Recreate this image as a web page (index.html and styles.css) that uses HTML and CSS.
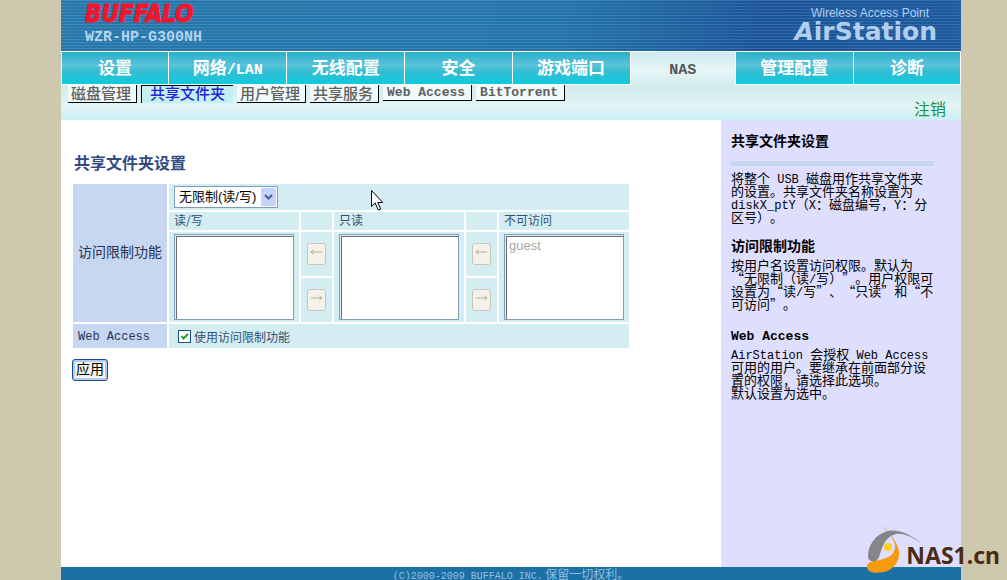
FILE: index.html
```html
<!DOCTYPE html>
<html lang="zh-CN">
<head>
<meta charset="utf-8">
<title>AirStation - 共享文件夹设置</title>
<link rel="stylesheet" href="styles.css">
</head>
<body>
<div class="page">
  <header class="banner">
    <div class="brand">
      <div class="brand-name">BUFFALO</div>
      <div class="model">WZR-HP-G300NH</div>
    </div>
    <div class="product">
      <div class="product-kind">Wireless Access Point</div>
      <div class="product-name"><span class="slant">A</span>irStation</div>
    </div>
  </header>

  <div class="menus">
    <nav class="tabs">
      <a class="tab" href="#">设置</a>
      <a class="tab long" href="#">网络<span class="mono">/LAN</span></a>
      <a class="tab long" href="#">无线配置</a>
      <a class="tab" href="#">安全</a>
      <a class="tab long" href="#">游戏端口</a>
      <a class="tab current" href="#"><span class="mono">NAS</span></a>
      <a class="tab long" href="#">管理配置</a>
      <a class="tab" href="#">诊断</a>
    </nav>
    <div class="subbar">
      <nav class="subtabs">
        <a class="subtab" href="#">磁盘管理</a>
        <a class="subtab active" href="#">共享文件夹</a>
        <a class="subtab" href="#">用户管理</a>
        <a class="subtab" href="#">共享服务</a>
        <a class="subtab latin" href="#">Web Access</a>
        <a class="subtab latin" href="#">BitTorrent</a>
      </nav>
      <a class="logout" href="#">注销</a>
    </div>
  </div>

  <div class="body">
    <main class="content">
      <h1>共享文件夹设置</h1>
      <form>
        <table class="settings">
          <colgroup>
            <col class="c-label"><col class="c-list"><col class="c-move"><col class="c-list"><col class="c-move"><col class="c-list">
          </colgroup>
          <tr class="r-mode">
            <th rowspan="4" scope="row"><label for="mode">访问限制功能</label></th>
            <td colspan="5">
              <span class="dropdown">
                <select id="mode"><option>无限制(读/写)</option></select>
                <svg class="chevron" viewBox="0 0 15 18" aria-hidden="true"><rect width="15" height="18" rx="1"/><path d="M4 7l3.5 3.5L11 7"/></svg>
              </span>
            </td>
          </tr>
          <tr class="r-head">
            <td><label for="rw">读/写</label></td>
            <td></td>
            <td><label for="ro">只读</label></td>
            <td></td>
            <td><label for="none">不可访问</label></td>
          </tr>
          <tr class="r-list">
            <td rowspan="2"><select class="list" id="rw" size="5" multiple></select></td>
            <td class="move"><button type="button" disabled aria-label="移至读/写"><svg viewBox="0 0 14 8"><path d="M1 4h12M4 1.500L1 4l3 2.500"/></svg></button></td>
            <td rowspan="2"><select class="list" id="ro" size="5" multiple></select></td>
            <td class="move"><button type="button" disabled aria-label="移至只读"><svg viewBox="0 0 14 8"><path d="M1 4h12M4 1.500L1 4l3 2.500"/></svg></button></td>
            <td rowspan="2"><select class="list" id="none" size="5" multiple><option disabled>guest</option></select></td>
          </tr>
          <tr class="r-list">
            <td class="move"><button type="button" disabled aria-label="移至只读"><svg viewBox="0 0 14 8"><path d="M1 4h12M10 1.500L13 4l-3 2.500"/></svg></button></td>
            <td class="move"><button type="button" disabled aria-label="移至不可访问"><svg viewBox="0 0 14 8"><path d="M1 4h12M10 1.500L13 4l-3 2.500"/></svg></button></td>
          </tr>
          <tr class="r-web">
            <th scope="row"><span class="mono">Web Access</span></th>
            <td colspan="5"><label class="check"><input type="checkbox" checked>使用访问限制功能</label></td>
          </tr>
        </table>
        <button class="apply" type="button">应用</button>
      </form>
    </main>

    <aside class="help">
      <h2>共享文件夹设置</h2>
      <hr>
      <p>将整个<span class="mono"> USB </span>磁盘用作共享文件夹<br>的设置。共享文件夹名称设置为<br><span class="mono">diskX_ptY</span>（<span class="mono">X</span>：磁盘编号，<span class="mono">Y</span>：分<br>区号）。</p>
      <h2>访问限制功能</h2>
      <p>按用户名设置访问权限。默认为<br>“无限制（读<span class="mono">/</span>写）”。用户权限可<br>设置为“读<span class="mono">/</span>写”、“只读”和“不<br>可访问”。</p>
      <h2><span class="mono">Web Access</span></h2>
      <p><span class="mono">AirStation </span>会授权<span class="mono"> Web Access</span><br>可用的用户。要继承在前面部分设<br>置的权限，请选择此选项。<br>默认设置为选中。</p>
    </aside>
  </div>

  <footer class="footer"><span class="mono">(C)2000-2009 BUFFALO INC.</span> 保留一切权利。</footer>
</div>

<svg class="pointer" viewBox="0 0 13 21" aria-hidden="true"><path d="M.5.5v16l3.700-3.500 3 7 2.500-1-3-6.500h5z"/></svg>

<div class="watermark">
  <svg viewBox="0 0 56 50" aria-hidden="true">
    <path class="w-orange" d="M14 1c8 7 16 16 18 26 1 10-5 19-15 21C8 50 0 48 0 43c0-5 6-6 12-7 9-2 17-5 16-15C27 14 20 8 14 1z"/>
    <path class="w-gray" d="M54 19C44 11 32 5 21 7 8 10 1 22 1 32c0 6 8 8 11 1 3-8 5-20 17-23 9-1 17 4 25 9z"/>
    <circle class="w-yellow" cx="21" cy="23" r="4"/>
  </svg>
  <span>NAS1.cn</span>
</div>
</body>
</html>
```
FILE: styles.css
```css
* { box-sizing: border-box; }

body {
  margin: 0;
  padding: 0 46px 0 61px;
  background: #cec8ae;
  font-family: "Noto Sans CJK SC", sans-serif;
  font-size: 13px;
  text-spacing-trim: space-all;
}

a { text-decoration: none; }

.mono {
  font-family: "Liberation Mono", monospace;
  font-size: 12px;
  line-height: 0;
}

.page {
  display: flex;
  flex-direction: column;
  height: 100vh;
  min-width: 880px;
  background: #fff;
}

/* Banner */
.banner {
  display: flex;
  justify-content: space-between;
  height: 51px;
  padding: 0 24px;
  background:
    repeating-linear-gradient(rgba(255, 255, 255, .12) 0 1px, transparent 1px 3px),
    linear-gradient(100deg, #2577ac 0%, #2274aa 55%, #1a5499 78%, #1b5a9d 100%);
}

.brand-name {
  height: 28px;
  color: #f3152c;
  font: italic bold 24px/28px "DejaVu Sans Condensed", "DejaVu Sans", sans-serif;
  -webkit-text-stroke: 1px #f3152c;
}

.model {
  color: #b4d5ec;
  font: bold 15px/20px "Liberation Mono", monospace;
}

.product {
  padding-top: 5px;
  color: #b0cfee;
  text-align: right;
}

.product-kind {
  padding-right: 8px;
  font: 12px/16px "Liberation Sans", Arial, sans-serif;
}

.product-name { font: bold 25px/22px "DejaVu Sans", sans-serif; }
.slant { font-style: oblique; }

/* Menus */
.menus {
  height: 69px;
  border-top: 1px solid #fff;
  background: linear-gradient(#cdeaee 0, #e6f5f6 26%, #d3ebed 52%, #e2f4f5 80%, #caf0f3 100%);
}

.tabs {
  display: flex;
  height: 33px;
  padding: 0 0 0 1px;
}

.tab {
  flex: 107 1 0;
  border-right: 1px solid #fff;
  border-bottom: 1px solid #fff;
  background: linear-gradient(#2baecb 0, #5ac3d9 42%, #32bdd2 62%, #12c9dd 100%);
  color: #fff;
  font-size: 17px;
  font-weight: bold;
  line-height: 30px;
  text-align: center;
}

.tab.long { flex-grow: 118; }
.tab .mono { font-size: 15px; }

.tab.current {
  flex-grow: 105;
  border-bottom: 0;
  background: none;
  color: #555;
}

.subbar {
  display: flex;
  justify-content: space-between;
  padding: 0 15px 0 7px;
}

.subtabs {
  display: flex;
  align-items: flex-start;
  gap: 4px;
}

.subtab {
  height: 18px;
  padding: 0 5px 0 3px;
  border-right: 1px solid #000;
  border-bottom: 1px solid #000;
  background: #f0fafa;
  color: #606060;
  font-size: 15px;
  font-weight: 500;
  line-height: 15px;
}

.subtab.active {
  padding: 0 8px;
  border: 0 solid #000;
  border-width: 1px 0 0 1px;
  background: #c4f0f1;
  color: #2323d8;
  line-height: 13px;
}

.subtab.latin {
  height: 16px;
  padding: 0 6px 0 4px;
  font: bold 13px/16px "Liberation Mono", monospace;
}

.logout {
  padding-top: 12px;
  color: #159447;
  font-size: 16px;
  line-height: 22px;
}

/* Body */
.body {
  display: flex;
  flex: 1;
  min-height: 0;
}

.content {
  flex: 1;
  padding: 31px 10px 0;
}

h1 {
  margin: 0 0 9px;
  padding-left: 3px;
  color: #334a80;
  font-size: 16px;
  line-height: 22px;
}

.settings {
  width: 560px;
  border-spacing: 2px;
  table-layout: fixed;
  color: #33506f;
}

.c-label { width: 94px; }
.c-list { width: 130px; }
.c-move { width: 31px; }

.settings th {
  padding: 0 5px 4px;
  background: #c8d7f1;
  color: #263352;
  font-size: 14px;
  font-weight: normal;
  line-height: 20px;
  text-align: left;
  white-space: nowrap;
}

.settings td {
  padding: 0 5px;
  background: #d3edf2;
  font-size: 12px;
}

.r-mode { height: 26px; }
.r-head { height: 18px; line-height: 16px; }
.r-list { height: 44px; }
.r-web { height: 24px; }

.r-head td { padding: 0 5px 2px; }

.dropdown {
  position: relative;
  display: block;
  width: 104px;
}

.dropdown select {
  display: block;
  width: 100%;
  height: 22px;
  padding: 0 18px 0 4px;
  border: 1px solid #7f9db9;
  border-radius: 0;
  background: #fff;
  appearance: none;
  color: #000;
  font: 13px/20px "Liberation Sans", "Noto Sans CJK SC", sans-serif;
}

.chevron {
  position: absolute;
  top: 2px;
  right: 2px;
  width: 15px;
  height: 18px;
  fill: #c3d3fb;
}

.chevron path {
  fill: none;
  stroke: #4d6185;
  stroke-width: 2;
}

.list {
  display: block;
  width: 120px;
  height: 86px;
  padding: 3px 2px;
  overflow: hidden;
  border: 1px solid #7f9db9;
  border-radius: 0;
  background: #fff;
  box-shadow: inset 1px 1px 0 #e4eef5, inset 2px 2px 0 #666b78;
  font: 13px/16px "Liberation Sans", Arial, sans-serif;
}

.list option {
  min-height: 16px;
  padding: 0 2px;
  color: #aca899;
}

.settings .move { text-align: center; }

.move button {
  display: flex;
  width: 19px;
  height: 22px;
  margin: 0 auto;
  padding: 4px 2px;
  border: 1px solid #c9c7ba;
  border-radius: 3px;
  background: #f4f2e8;
}

.move svg {
  width: 14px;
  height: 8px;
  fill: none;
  stroke: #aca899;
}

.check {
  display: flex;
  align-items: center;
  gap: 3px;
  padding-left: 4px;
}

.check input {
  width: 13px;
  height: 13px;
  margin: 0;
  border: 1px solid #1c5180;
  appearance: none;
  background: #fff;
}

.check input:checked {
  background: #fff url("data:image/svg+xml,%3Csvg xmlns='http://www.w3.org/2000/svg' viewBox='0 0 11 11'%3E%3Cpath d='M2.500 5l2 2.500L9 3' fill='none' stroke='%2321a121' stroke-width='2'/%3E%3C/svg%3E");
}

.apply {
  display: block;
  height: 22px;
  margin: 9px 0 0 1px;
  padding: 0 3px 4px;
  border: 1px solid #1d4a86;
  border-radius: 3px;
  background: #f5f4ee;
  box-shadow: inset 0 0 0 2px #b3cbf3;
  color: #000;
  font: 14px/16px "Noto Sans CJK SC", sans-serif;
}

/* Help column */
.help {
  flex: 0 0 240px;
  padding: 12px 10px 0;
  background: #dedeff;
  color: #000;
}

.help h2 {
  margin: 14px 0 5px;
  font-size: 14px;
  line-height: 16px;
}

.help p + h2:last-of-type { margin-top: 16px; }
.help h2:first-child { margin-top: 0; }
.help h2 .mono { font-size: 13px; }

.help hr {
  width: 203px;
  height: 5px;
  margin: 13px 0 5px;
  border: 0;
  background: #c5d7f0;
}

.help p {
  margin: 0;
  font-size: 13px;
  line-height: 13px;
  white-space: nowrap;
}

.footer {
  height: 13px;
  overflow: hidden;
  background: #1b70a5;
  color: #8fc0e0;
  font-size: 12px;
  line-height: 13px;
  text-align: center;
}

.footer .mono { font-size: 10px; }

/* Overlays */
.pointer {
  position: absolute;
  top: 190px;
  left: 371px;
  width: 13px;
  height: 21px;
  fill: #fff;
  stroke: #000;
}

.watermark {
  position: absolute;
  right: 7px;
  bottom: 6px;
  display: flex;
  height: 50px;
  color: #4a2c14;
  font: bold 23px/62px "Noto Sans", sans-serif;
}

.watermark svg {
  width: 56px;
  height: 50px;
  margin-right: -17px;
}

.w-orange { fill: #f59a0c; }
.w-gray { fill: #85858a; }
.w-yellow { fill: #fbd21c; }
```
